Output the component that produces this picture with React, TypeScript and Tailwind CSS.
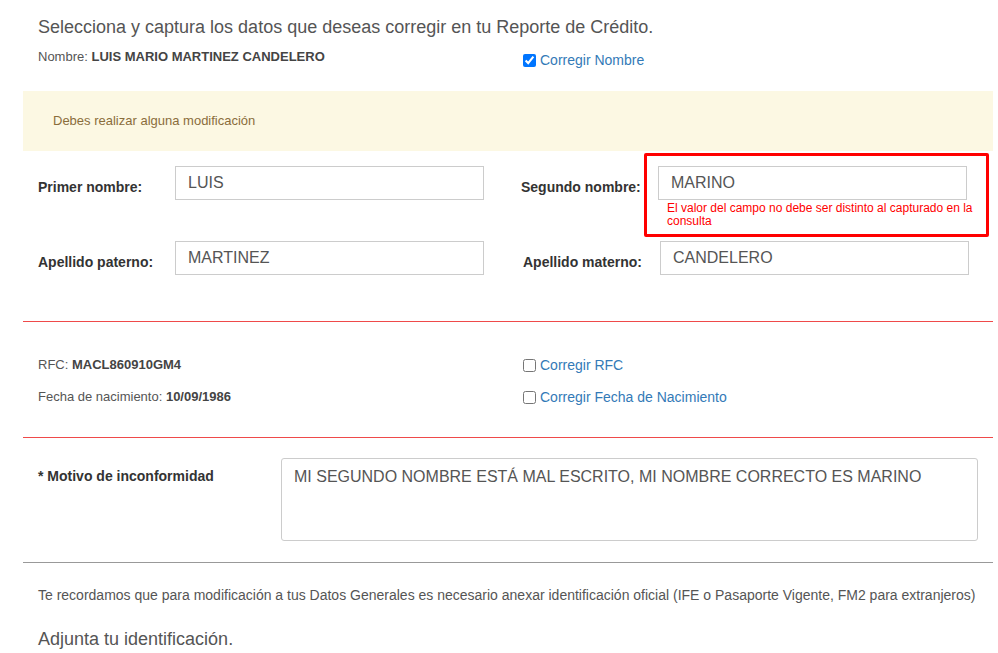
export default function App() {
  const label = "text-[14px] font-bold text-[#333]";
  const input =
    "h-[34px] border border-[#ccc] px-3 text-[16px] text-[#555] flex items-center";
  return (
    <div className="w-[998px] h-[653px] overflow-hidden bg-white text-[#555] font-[family-name:Liberation_Sans,Arial,sans-serif]">
      <div className="ml-[23px] w-[970px]">
        <div className="px-[15px] pt-[15px]">
          <h2 className="text-[18px] leading-[24px] text-[#555]">
            Selecciona y captura los datos que deseas corregir en tu Reporte de Crédito.
          </h2>
          <div className="flex mt-[8px] h-[24px]">
            <div className="w-[485px] text-[13px] text-[#555]">
              Nombre: <b className="text-[#444]">LUIS MARIO MARTINEZ CANDELERO</b>
            </div>
            <label className="flex items-center gap-[4px] text-[14px] text-[#337ab7] mt-[2px]">
              <input type="checkbox" defaultChecked className="w-[13px] h-[13px] accent-[#0075ff]" />
              Corregir Nombre
            </label>
          </div>
        </div>
        <div className="mt-[20px] h-[60px] bg-[#fcf8e3] flex items-center px-[30px] text-[13px] text-[#8a6d3b]">
          Debes realizar alguna modificación
        </div>
        <div className="px-[15px] pt-[15px] h-[171px] border-b border-b-[#ef4a4a]">
          <div className="flex h-[75px]">
            <div className="w-[485px] flex items-start">
              <span className={`${label} w-[137px] mt-[11px]`}>Primer nombre:</span>
              <div className={`${input} w-[309px]`}>LUIS</div>
            </div>
            <div className="flex items-start relative">
              <span className={`${label} w-[137px] mt-[11px]`}>Segundo nombre:</span>
              <div>
                <div className={`${input} w-[309px]`}>MARINO</div>
                <div className="text-[12px] leading-[13px] text-[#ff0000] pl-[9px] pt-[2px] w-[320px]">
                  El valor del campo no debe ser distinto al capturado en la consulta
                </div>
              </div>
              <div className="absolute left-[123px] top-[-13px] w-[345px] h-[84px] border-[3px] border-[#ff0000] rounded-[2px]" />
            </div>
          </div>
          <div className="flex">
            <div className="w-[485px] flex items-start">
              <span className={`${label} w-[137px] mt-[11px]`}>Apellido paterno:</span>
              <div className={`${input} w-[309px]`}>MARTINEZ</div>
            </div>
            <div className="flex items-start">
              <span className={`${label} w-[137px] mt-[11px]`}>Apellido materno:</span>
              <div className={`${input} w-[309px]`}>CANDELERO</div>
            </div>
          </div>
        </div>
        <div className="px-[15px] pt-[33px] h-[116px] border-b border-b-[#ef4a4a] text-[13px]">
          <div className="flex h-[32px]">
            <div className="w-[485px]">
              RFC: <b className="text-[#444]">MACL860910GM4</b>
            </div>
            <label className="flex items-center gap-[4px] text-[14px] text-[#337ab7] h-[16px] mt-[2px]">
              <input type="checkbox" className="w-[13px] h-[13px]" />
              Corregir RFC
            </label>
          </div>
          <div className="flex">
            <div className="w-[485px]">
              Fecha de nacimiento: <b className="text-[#444]">10/09/1986</b>
            </div>
            <label className="flex items-center gap-[4px] text-[14px] text-[#337ab7] h-[16px] mt-[2px]">
              <input type="checkbox" className="w-[13px] h-[13px]" />
              Corregir Fecha de Nacimiento
            </label>
          </div>
        </div>
        <div className="px-[15px] pt-[20px] h-[125px] border-b border-b-[#999] flex">
          <span className={`${label} text-[13px] w-[243px] mt-[8px]`}>* Motivo de inconformidad</span>
          <div className="w-[697px] h-[83px] border border-[#ccc] rounded-[3px] px-3 pt-[6px] text-[16px] text-[#555]">
            MI SEGUNDO NOMBRE ESTÁ MAL ESCRITO, MI NOMBRE CORRECTO ES MARINO
          </div>
        </div>
        <div className="px-[15px] pt-[22px] text-[14px] text-[#555] whitespace-nowrap">
          Te recordamos que para modificación a tus Datos Generales es necesario anexar identificación oficial (IFE o Pasaporte Vigente, FM2 para extranjeros)
        </div>
        <div className="px-[15px] mt-[20px] text-[18px] text-[#555]">Adjunta tu identificación.</div>
      </div>
    </div>
  );
}
